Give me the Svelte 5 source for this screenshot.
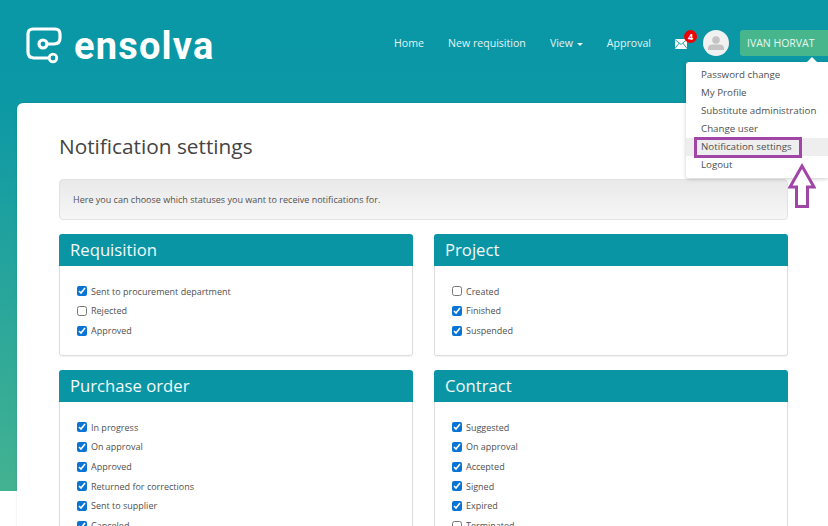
<script>
  const panels = [
    [
      { title: 'Requisition', items: [['Sent to procurement department', true], ['Rejected', false], ['Approved', true]] },
      { title: 'Purchase order', items: [['In progress', true], ['On approval', true], ['Approved', true], ['Returned for corrections', true], ['Sent to supplier', true], ['Canceled', true]] }
    ],
    [
      { title: 'Project', items: [['Created', false], ['Finished', true], ['Suspended', true]] },
      { title: 'Contract', items: [['Suggested', true], ['On approval', true], ['Accepted', true], ['Signed', true], ['Expired', true], ['Terminated', false]] }
    ]
  ];
  const menu = ['Password change', 'My Profile', 'Substitute administration', 'Change user', 'Notification settings', 'Logout'];
</script>

<div class="page">
  <div class="backdrop"></div>
  <header class="topbar">
    <div class="brand">
      <svg class="logo" width="37" height="38" viewBox="0 0 37 38" fill="none" stroke="#fff" stroke-width="3.2">
        <path d="M21 17 H28 Q34 17 34 11 V7 Q34 2 29 2 H7 Q2 2 2 7 V25 Q2 31 8 31 H23" />
        <circle cx="17" cy="17" r="4" />
        <circle cx="27" cy="31" r="3.800" stroke-width="2.800"/>
      </svg>
      <span class="wordmark">ensolva</span>
    </div>
    <nav class="nav">
      <span>Home</span>
      <span>New requisition</span>
      <span>View <i class="caret"></i></span>
      <span>Approval</span>
    </nav>
    <div class="mail">
      <svg width="12" height="10" viewBox="0 0 12 10">
        <path d="M0 0H12V10H0Z" fill="#fff"/>
        <path d="M0 0.500L6 5.500L12 0.500M0 9.500L4.200 4M12 9.500L7.800 4" fill="none" stroke="#0c98a5" stroke-width="0.900"/>
      </svg>
      <b class="badge">4</b>
    </div>
    <div class="avatar">
      <svg width="16" height="14" viewBox="0 0 16 14" fill="#c4c4c4"><circle cx="8" cy="4" r="3.800"/><path d="M0 14V12Q0 8.500 5 8.500H11Q16 8.500 16 12V14Z"/></svg>
    </div>
    <div class="user">IVAN HORVAT</div>
  </header>

  <main class="card">
    <h1>Notification settings</h1>
    <div class="well">Here you can choose which statuses you want to receive notifications for.</div>
    <div class="columns">
      {#each panels as col}
        <div class="col">
          {#each col as p}
            <section class="panel">
              <h2>{p.title}</h2>
              <div class="body">
                {#each p.items as [label, on]}
                  <label class="row">
                    <input type="checkbox" checked={on} />
                    <span>{label}</span>
                  </label>
                {/each}
              </div>
            </section>
          {/each}
        </div>
      {/each}
    </div>
  </main>

  <div class="menu">
    {#each menu as m, i}
      <div class="item" class:active={i === 4}>{m}</div>
    {/each}
    <div class="hl"></div>
  </div>
  <svg class="arrow" width="28" height="46" viewBox="0 0 28 46" fill="#fff" stroke="#a145a6" stroke-width="3">
    <path d="M14 3 L26 24 H19.500 V43.500 H8.500 V24 H2 Z" />
  </svg>
</div>

<style>
  :global(body) { margin: 0; background: #fff; }
  .page {
    position: relative; width: 828px; height: 526px; overflow: hidden;
    font-family: "Open Sans", sans-serif; color: #505050;
  }
  .backdrop {
    position: absolute; left: 0; top: 0; width: 100%; height: 491px;
    background: linear-gradient(180deg, #0a97a6 0%, #0c98a5 20%, #27a59c 58%, #43b291 100%);
  }
  .topbar {
    position: relative; height: 103px; box-sizing: border-box; padding: 29px 0 0 26px;
    display: flex; align-items: flex-start;
  }
  .brand { display: flex; align-items: flex-start; }
  .logo { display: block; margin-top: -2px; }
  .wordmark {
    margin-left: 11px; margin-top: 2px; color: #fff; font-family: "Roboto", sans-serif; font-weight: 700;
    font-size: 38px; line-height: 30px; letter-spacing: 1.2px; display: block;
  }
  .nav {
    margin-left: auto; margin-top: 1px; display: flex; gap: 24px; color: #e4f3f5; font-size: 10.600px; line-height: 27px;
  }
  .caret {
    display: inline-block; border-top: 3px solid #e4f3f5; border-left: 3px solid transparent; border-right: 3px solid transparent;
    vertical-align: middle; margin-left: 1px;
  }
  .mail { position: relative; margin-left: 24px; height: 28px; width: 28px; display: flex; align-items: center; padding-top: 2px; box-sizing: border-box; }
  .badge {
    position: absolute; left: 9px; top: 1px; width: 13px; height: 13px; border-radius: 50%; background: #ee0000;
    color: #fff; font-size: 9px; line-height: 13px; text-align: center; font-weight: 700;
  }
  .avatar {
    width: 26px; height: 26px; border-radius: 50%; background: #f1f1f1; display: flex; align-items: center; justify-content: center;
    margin-top: 1px;
  }
  .user {
    margin-left: 11px; width: 88px; height: 26px; margin-top: 1px; box-sizing: border-box; padding-left: 7px; background: #47b68d;
    border-radius: 3px 0 0 3px; color: #e8f6f1; font-size: 10.500px; line-height: 26px; white-space: nowrap;
  }
  .card {
    position: relative; margin-left: 17px; width: 830px; box-sizing: border-box; padding: 28px 0 0 42px;
    background: #fff; border-radius: 6px 0 0 0; height: 500px; box-shadow: 0 0 2px rgba(0,0,0,.15);
  }
  h1 { margin: 0; font-size: 20.800px; font-weight: 400; line-height: 30px; color: #444; }
  .well {
    margin-top: 18px; width: 729px; height: 41px; box-sizing: border-box; padding-left: 13px; line-height: 39px; font-size: 9.020px;
    background: linear-gradient(180deg, #e9e9e9, #f6f6f6); border: 1px solid #e2e2e2; border-radius: 4px;
  }
  .columns { display: flex; gap: 21px; margin-top: 14px; width: 729px; }
  .col { width: 354px; display: flex; flex-direction: column; gap: 14px; }
  .panel { border: 1px solid #ddd; border-radius: 3px; box-shadow: 0 1px 1px rgba(0,0,0,.05); background: #fff; }
  h2 {
    margin: -1px -1px 0; background: #0a95a5; color: #f2fafb; font-size: 16.700px; font-weight: 400; line-height: 32px; padding: 0 11px;
    border-radius: 3px 3px 0 0;
  }
  .body { padding: 15.300px 17px 14.700px; }
  .row { display: flex; align-items: center; height: 19.700px; font-size: 9px; }
  .row input { width: 10px; height: 10px; margin: 0 4px 0 0; accent-color: #0a74d4; flex: none; }
  .menu {
    position: absolute; left: 686px; top: 62px; width: 142px; height: 116px; box-sizing: border-box; padding-top: 4px;
    background: #fff; box-shadow: 0 1px 4px rgba(0,0,0,.2); font-size: 9.750px; border-radius: 3px 0 0 3px;
  }
  .menu::before {
    content: ""; position: absolute; right: 11px; top: -5px; border-bottom: 5px solid #fff; border-left: 5px solid transparent; border-right: 5px solid transparent;
  }
  .item { height: 18px; line-height: 18.800px; padding-left: 15px; white-space: nowrap; }
  .item.active { background: #eeeeee; }
  .hl {
    position: absolute; left: 8px; top: 75px; width: 108px; height: 21px; box-sizing: border-box; border: 3px solid #a145a6;
  }
  .arrow { position: absolute; left: 788px; top: 163px; }
</style>
